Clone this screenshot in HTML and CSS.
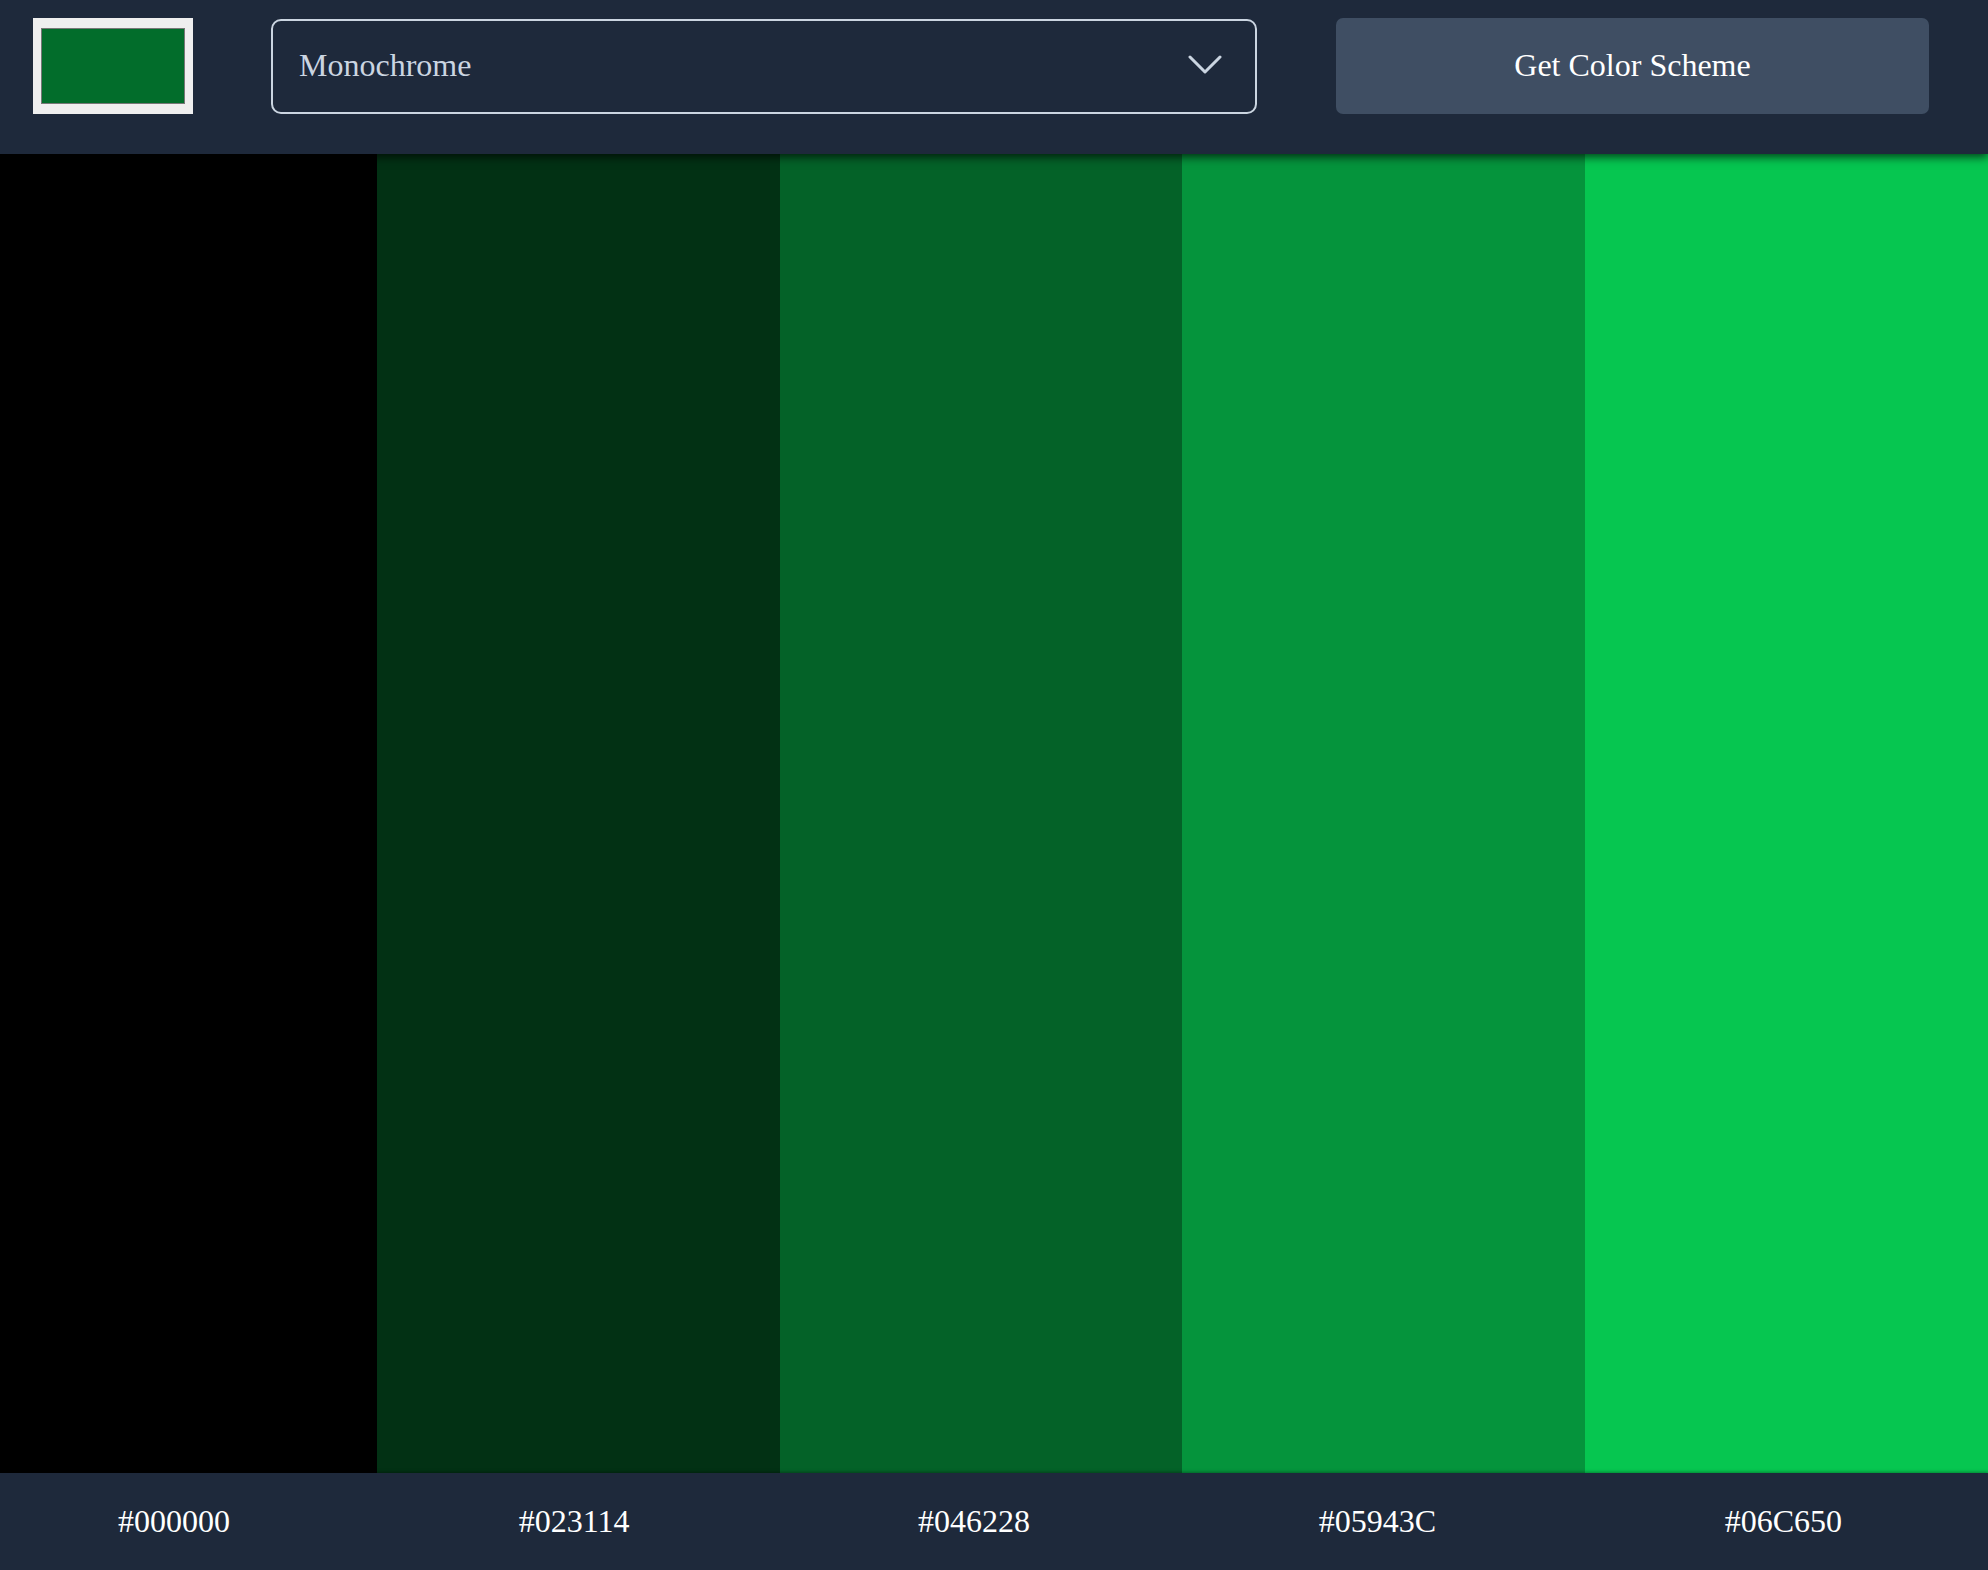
FILE: index.html
```html
<!DOCTYPE html>
<html lang="en">
<head>
<meta charset="utf-8">
<title>Color Scheme</title>
<link rel="stylesheet" href="styles.css">
</head>
<body>
<div class="app">
  <header class="topbar">
    <div class="color-input"><div class="color-swatch"></div></div>
    <div class="select">
      <span class="select-label">Monochrome</span>
      <svg class="chevron" width="34" height="20" viewBox="0 0 34 20" aria-hidden="true">
        <path d="M2 2 L17 17 L32 2" fill="none" stroke="#cbd5e1" stroke-width="3" stroke-linecap="round" stroke-linejoin="round"/>
      </svg>
    </div>
    <button class="get-btn">Get Color Scheme</button>
  </header>
  <main class="swatches">
    <div class="swatch s1"></div>
    <div class="swatch s2"></div>
    <div class="swatch s3"></div>
    <div class="swatch s4"></div>
    <div class="swatch s5"></div>
  </main>
  <footer class="labels">
    <span class="label">#000000</span>
    <span class="label">#023114</span>
    <span class="label">#046228</span>
    <span class="label">#05943C</span>
    <span class="label">#06C650</span>
  </footer>
</div>
</body>
</html>
```
FILE: styles.css
```css
* { box-sizing: border-box; }
html, body {
  margin: 0;
  padding: 0;
  height: 100%;
  background: #1e293b;
  font-family: "Liberation Serif", "Times New Roman", serif;
}
.app {
  display: flex;
  flex-direction: column;
  height: 100vh;
}
.topbar {
  position: relative;
  z-index: 2;
  height: 154px;
  flex: 0 0 154px;
  background: #1e293b;
  display: flex;
  align-items: flex-start;
  gap: 78px;
  padding: 18px 0 0 33px;
  box-shadow: 0 3px 9px rgba(0, 0, 0, 0.7);
}
.color-input {
  width: 160px;
  height: 96px;
  background: #efefef;
  padding: 10px 8px;
}
.color-swatch {
  width: 100%;
  height: 100%;
  background: #026d2b;
  border: 1px solid #777777;
}
.select {
  width: 986px;
  height: 95px;
  margin-top: 1px;
  border: 2px solid #cbd5e1;
  border-radius: 10px;
  display: flex;
  align-items: center;
  justify-content: space-between;
  padding: 0 33px 0 26px;
  color: #cbd5e1;
}
.select-label {
  font-size: 32px;
  line-height: 1;
  margin-bottom: 3px;
}
.chevron { display: block; margin-bottom: 3px; }
.get-btn {
  width: 593px;
  height: 96px;
  margin-left: 1px;
  padding: 0 0 2px;
  background: #3f4e63;
  color: #ffffff;
  border: none;
  border-radius: 7px;
  font-family: "Liberation Serif", "Times New Roman", serif;
  font-size: 32px;
}
.swatches {
  flex: 1 1 auto;
  display: grid;
  grid-template-columns: 377px 403px 402px 403px 1fr;
}
.s1 { background: #000000; }
.s2 { background: #023114; }
.s3 { background: #046228; }
.s4 { background: #05943c; }
.s5 { background: #06c650; }
.labels {
  position: relative;
  z-index: 2;
  flex: 0 0 97px;
  height: 97px;
  background: #1e293b;
  display: flex;
  align-items: center;
  justify-content: space-between;
  padding: 0 146px 2px 118px;
  box-shadow: 0 -1px 3px rgba(0, 0, 0, 0.35);
}
.label {
  color: #ffffff;
  font-size: 32px;
  line-height: 1;
}
```
